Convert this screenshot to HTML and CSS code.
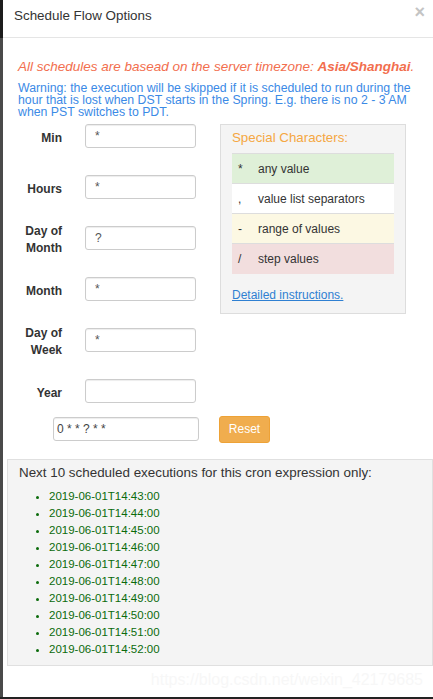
FILE: index.html
```html
<!DOCTYPE html>
<html>
<head>
<meta charset="utf-8">
<title>Schedule Flow Options</title>
<link rel="stylesheet" href="styles.css">
</head>
<body>
<div class="modal">
  <div class="modal-header">
    <h4 class="modal-title">Schedule Flow Options</h4>
    <span class="close">×</span>
  </div>
  <div class="modal-body">
    <p class="tz-note">All schedules are basead on the server timezone: <b>Asia/Shanghai</b>.</p>
    <p class="dst-warning">Warning: the execution will be skipped if it is scheduled to run during the hour that is lost when DST starts in the Spring. E.g. there is no 2 - 3 AM when PST switches to PDT.</p>
    <div class="cron-area">
      <div class="cron-form">
        <div class="field"><label>Min</label><input type="text" value="*"></div>
        <div class="field"><label>Hours</label><input type="text" value="*"></div>
        <div class="field"><label>Day of Month</label><input type="text" value="?"></div>
        <div class="field"><label>Month</label><input type="text" value="*"></div>
        <div class="field"><label>Day of Week</label><input type="text" value="*"></div>
        <div class="field"><label>Year</label><input type="text" value=""></div>
      </div>
      <div class="special">
        <div class="special-title">Special Characters:</div>
        <table class="special-table">
          <tr class="row-success"><td class="sym">*</td><td class="desc">any value</td></tr>
          <tr><td class="sym">,</td><td class="desc">value list separators</td></tr>
          <tr class="row-warning"><td class="sym">-</td><td class="desc">range of values</td></tr>
          <tr class="row-danger"><td class="sym">/</td><td class="desc">step values</td></tr>
        </table>
        <a class="details-link" href="#">Detailed instructions.</a>
      </div>
    </div>
    <div class="expr-row">
      <input type="text" class="expr" value="0 * * ? * *">
      <button class="btn-reset" type="button">Reset</button>
    </div>
  </div>
  <div class="next-runs">
    <div class="next-title">Next 10 scheduled executions for this cron expression only:</div>
    <ul class="run-list">
      <li>2019-06-01T14:43:00</li>
      <li>2019-06-01T14:44:00</li>
      <li>2019-06-01T14:45:00</li>
      <li>2019-06-01T14:46:00</li>
      <li>2019-06-01T14:47:00</li>
      <li>2019-06-01T14:48:00</li>
      <li>2019-06-01T14:49:00</li>
      <li>2019-06-01T14:50:00</li>
      <li>2019-06-01T14:51:00</li>
      <li>2019-06-01T14:52:00</li>
    </ul>
  </div>
  <div class="watermark">https://blog.csdn.net/weixin_42179685</div>
</div>
</body>
</html>
```

FILE: styles.css
```css
html, body {
  margin: 0;
  padding: 0;
  height: 699px;
  overflow: hidden;
}
body {
  background: linear-gradient(#1c1c1c 0, #1c1c1c 38px, #4a4a4a 38px, #4a4a4a 697px, #222 697px);
  font-family: "Liberation Sans", Arial, sans-serif;
  color: #333;
}
.modal {
  position: relative;
  margin-left: 3px;
  width: 430px;
  height: 697px;
  background: #fff;
}
.modal-header {
  box-sizing: border-box;
  height: 38px;
  border-bottom: 1px solid #e5e5e5;
  padding: 6px 11px 0;
  display: flex;
  justify-content: space-between;
  align-items: flex-start;
}
.modal-title {
  margin: 0;
  font-size: 13.4px;
  font-weight: normal;
  line-height: 20px;
  color: #333;
}
.close {
  font-size: 18px;
  font-weight: bold;
  line-height: 1;
  color: #c4c4c4;
  margin-top: -3px;
  margin-right: -3px;
}
.modal-body {
  padding: 0 15px;
}
.tz-note {
  margin: 19.5px 0 0;
  font-size: 13.5px;
  line-height: 18px;
  font-style: italic;
  color: #f26e4e;
}
.dst-warning {
  margin: 6px 0 0;
  font-size: 12.3px;
  line-height: 12.4px;
  color: #3b8ae6;
}
.cron-area {
  display: flex;
  align-items: flex-start;
  margin-top: 5px;
}
.cron-form {
  display: flex;
  flex-direction: column;
  gap: 27px;
}
.field {
  display: flex;
  align-items: center;
  height: 24px;
}
.field label {
  width: 44px;
  text-align: right;
  font-size: 12px;
  font-weight: bold;
  line-height: 17px;
  padding-top: 5px;
  margin-right: 23px;
}
input[type="text"] {
  box-sizing: border-box;
  height: 24px;
  width: 111px;
  border: 1px solid #ccc;
  border-radius: 3px;
  padding: 0 9px;
  font-family: "Liberation Sans", Arial, sans-serif;
  font-size: 12px;
  color: #555;
  box-shadow: inset 0 1px 1px rgba(0, 0, 0, 0.075);
  outline: none;
}
.special {
  box-sizing: border-box;
  width: 186px;
  margin-left: 24px;
  border: 1px solid #ddd;
  background: #f4f4f4;
  padding: 4.5px 11px 9px;
}
.special-title {
  font-size: 13.3px;
  line-height: 18px;
  color: #f5a742;
}
.special-table {
  margin-top: 6px;
  width: 100%;
  border-collapse: collapse;
  table-layout: fixed;
  font-size: 12px;
}
.special-table td {
  height: 30px;
  box-sizing: border-box;
  border-top: 1px solid #ddd;
  color: #333;
  background: #fff;
}
.special-table td.sym {
  width: 26px;
  padding: 0 0 0 6px;
}
.special-table td.desc {
  padding: 0;
}
.special-table .row-success td { background: #dff0d8; }
.special-table .row-warning td { background: #fcf8e3; }
.special-table .row-danger td { background: #f2dede; }
.details-link {
  display: block;
  margin-top: 13.3px;
  font-size: 12px;
  line-height: 17px;
  color: #2f80d2;
  text-decoration: underline;
}
.expr-row {
  display: flex;
  align-items: flex-start;
  margin-top: 14px;
  padding-left: 35px;
}
input.expr {
  width: 146px;
  padding: 0 3px;
  color: #444;
}
.btn-reset {
  margin-left: 20px;
  margin-top: -1px;
  width: 51px;
  height: 27px;
  border: 1px solid #eea236;
  border-radius: 3px;
  background: #f0ad4e;
  color: #fff;
  font-family: "Liberation Sans", Arial, sans-serif;
  font-size: 12px;
  padding: 0;
}
.next-runs {
  box-sizing: border-box;
  margin: 16px 0 0 4px;
  width: 426px;
  height: 207px;
  border: 1px solid #e0e0e0;
  background: #f4f4f4;
  padding: 4.7px 11px 0;
}
.next-title {
  font-size: 13.4px;
  line-height: 18px;
  color: #333;
}
.run-list {
  margin: 5.8px 0 0;
  padding-left: 30px;
  font-size: 11.5px;
  line-height: 17px;
  color: #0b6b0b;
}
.watermark {
  position: absolute;
  right: 10px;
  top: 672px;
  font-size: 16px;
  line-height: 16px;
  color: #f7f7f7;
  white-space: nowrap;
}
```
